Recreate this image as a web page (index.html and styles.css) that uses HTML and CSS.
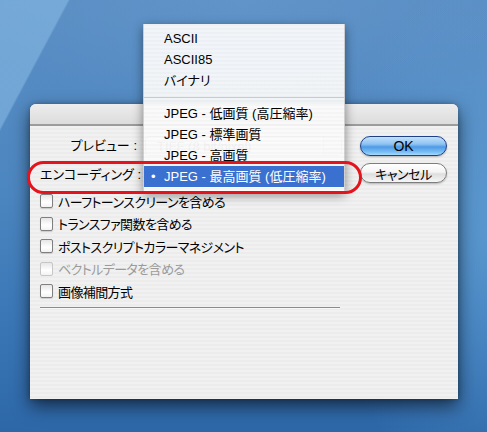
FILE: index.html
```html
<!DOCTYPE html>
<html lang="ja">
<head>
    <meta charset="utf-8">
    <title>PostScript オプション</title>
    <link rel="stylesheet" href="styles.css">
</head>
<body>
    <div class="desktop">

        <div class="dialog">
            <div class="titlebar"></div>
            <div class="content">
                <div class="top">
                    <div class="fields">
                        <span class="label">プレビュー :</span>
                        <div class="popup"><span class="popup-text">TIFF (8 bit/pixel)</span><span class="stepper"></span></div>
                        <span class="label">エンコーディング :</span>
                        <!-- covered by the open menu below -->
                        <div class="popup"><span class="popup-text"></span><span class="stepper"></span></div>
                    </div>
                    <div class="buttons">
                        <button class="btn btn-default">OK</button>
                        <button class="btn">キャンセル</button>
                    </div>
                </div>

                <ul class="checks">
                    <li><span class="box"></span>ハーフトーンスクリーンを含める</li>
                    <li><span class="box"></span>トランスファ関数を含める</li>
                    <li><span class="box"></span>ポストスクリプトカラーマネジメント</li>
                    <li class="disabled"><span class="box"></span>ベクトルデータを含める</li>
                    <li><span class="box"></span>画像補間方式</li>
                </ul>
                <div class="rule"></div>
            </div>
        </div>

        <!-- open popup menu for エンコーディング -->
        <ul class="menu">
            <li>ASCII</li>
            <li>ASCII85</li>
            <li>バイナリ</li>
            <li class="sep"></li>
            <li>JPEG - 低画質 (高圧縮率)</li>
            <li>JPEG - 標準画質</li>
            <li>JPEG - 高画質</li>
            <li class="selected">JPEG - 最高画質 (低圧縮率)</li>
        </ul>

        <div class="ring"></div>
    </div>
</body>
</html>
```

FILE: styles.css
```css
html, body {
    margin: 0;
    padding: 0;
}

body {
    font-family: "Liberation Sans", "Noto Sans CJK JP", sans-serif;
    font-size: 13px;
    font-feature-settings: "palt";
    color: #000;
}

.desktop {
    position: relative;
    width: 487px;
    height: 432px;
    box-sizing: border-box;
    padding: 104px 0 0 30px;
    overflow: hidden;
    background:
        linear-gradient(118deg, rgba(150, 200, 238, .45) 0 60px, transparent 62px),
        radial-gradient(ellipse 160px 260px at 100% 55%, rgba(110, 175, 225, .45), transparent),
        radial-gradient(ellipse 260px 120px at 50% 0%, rgba(110, 160, 210, .35), transparent),
        linear-gradient(180deg, #5a8ec4 0%, #4c86c0 45%, #3a76b6 75%, #2d67a8 100%);
}

/* dialog window */

.dialog {
    width: 428px;
    height: 295px;
    border-radius: 6px 6px 0 0;
    background: repeating-linear-gradient(180deg, #ececec 0 2px, #f1f1f1 2px 4px);
    box-shadow: 0 7px 18px rgba(0, 0, 0, .6), 0 0 5px rgba(0, 0, 0, .25);
    overflow: hidden;
}

.titlebar {
    height: 20px;
    background: linear-gradient(#ededed, #dcdcdc);
    border-bottom: 2px solid #9c9c9c;
}

.content {
    padding: 10px 0 0 10px;
}

.top {
    display: flex;
}

.fields {
    display: grid;
    grid-template-columns: 97px 197px;
    column-gap: 8px;
    row-gap: 9px;
    grid-auto-rows: 20px;
}

.label {
    text-align: right;
    line-height: 20px;
    white-space: nowrap;
}

.popup {
    display: flex;
    align-items: center;
    border: 1px solid #9a9a9a;
    border-radius: 4px;
    background: linear-gradient(#ffffff, #f2f2f2 50%, #e4e4e4 51%, #f7f7f7);
    box-sizing: border-box;
    padding-left: 11px;
    color: #555;
}

.popup-text {
    flex: 1;
    white-space: nowrap;
}

.stepper {
    width: 17px;
    height: 18px;
    border-left: 1px solid #b5b5b5;
    background: linear-gradient(#f4f4f4, #dcdcdc);
}

.buttons {
    display: flex;
    flex-direction: column;
    gap: 7px;
    margin-left: 18px;
    width: 87px;
}

.btn {
    height: 20px;
    padding: 0;
    border: 1px solid #7d7d7d;
    border-radius: 10px;
    font: inherit;
    font-size: 13px;
    letter-spacing: -0.5px;
    color: #000;
    background: linear-gradient(#ffffff 0%, #f4f4f4 45%, #dedede 55%, #f6f6f6 100%);
    box-shadow: 0 1px 2px rgba(0, 0, 0, .25);
}

.btn-default {
    font-size: 14px;
    letter-spacing: 0;
    border-color: #1f3f86;
    background: linear-gradient(#c4e1fb 0%, #8cc2f2 40%, #4f9ae6 55%, #7cc0f6 85%, #a8dafb 100%);
}

/* check boxes */

.checks {
    list-style: none;
    margin: 5px 0 0;
    padding: 0;
}

.checks li {
    display: flex;
    align-items: center;
    gap: 5px;
    height: 22.5px;
    white-space: nowrap;
    letter-spacing: -0.6px;
}

.box {
    width: 13px;
    height: 14px;
    box-sizing: border-box;
    border: 1px solid #7f7f7f;
    border-radius: 2px;
    background: linear-gradient(#e6e6e6, #ffffff 60%, #f2f2f2);
    box-shadow: 0 1px 1px rgba(0, 0, 0, .15);
}

.checks li.disabled {
    color: #9b9b9b;
}

.checks li.disabled .box {
    border-color: #c6c6c6;
    box-shadow: none;
}

.rule {
    width: 300px;
    height: 1px;
    margin-top: 4.5px;
    background: #8b8b8b;
    border-bottom: 1px solid #f8f8f8;
}

/* popup menu */

.menu {
    position: absolute;
    left: 143px;
    top: 24px;
    width: 202px;
    margin: 0;
    padding: 4px 0;
    list-style: none;
    background: repeating-linear-gradient(180deg, rgba(246, 246, 246, .94) 0 2px, rgba(251, 251, 251, .94) 2px 4px);
    border: 1px solid rgba(150, 150, 150, .4);
    border-top: none;
    box-sizing: border-box;
    box-shadow: 0 3px 10px rgba(0, 0, 0, .45);
}

.menu li {
    position: relative;
    height: 21px;
    line-height: 21px;
    padding-left: 20px;
    white-space: nowrap;
}

.menu li.sep {
    height: 12px;
    padding: 0;
}

.menu li.sep::after {
    content: "";
    position: absolute;
    left: 0;
    right: 0;
    top: 6px;
    height: 1px;
    background: #cacaca;
}

.menu li.selected {
    background: #3a70d0;
    color: #fff;
}

.menu li.selected::before {
    content: "•";
    position: absolute;
    left: 7px;
}

/* red callout */

.ring {
    position: absolute;
    left: 27px;
    top: 161px;
    width: 335px;
    height: 33px;
    box-sizing: border-box;
    border: 3px solid #e5131b;
    border-radius: 17px;
}
```
